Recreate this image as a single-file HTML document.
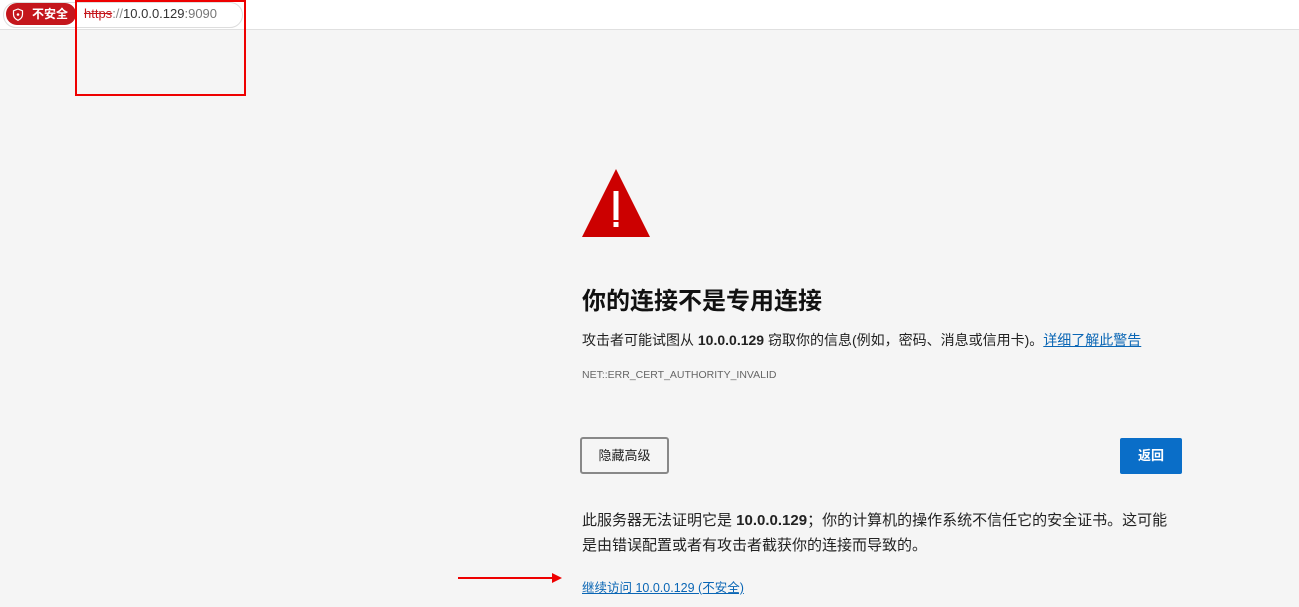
<!DOCTYPE html>
<html><head><meta charset="utf-8">
<style>
*{margin:0;padding:0;box-sizing:border-box}
body{width:1299px;height:607px;background:#f5f5f5;font-family:"Liberation Sans","Noto Sans CJK SC",sans-serif;position:relative;overflow:hidden;color:#1f1f1f}
.bar{position:absolute;left:0;top:0;width:1299px;height:30px;background:#fff;border-bottom:1px solid #e0e0e0}
.pill{position:absolute;left:3px;top:2px;width:240px;height:26px;border:1px solid #ddd;border-radius:13px;background:#fff}
.badge{position:absolute;left:6px;top:3px;width:70px;height:22px;border-radius:11px;background:#c4161c;color:#fff;font-size:12px;font-weight:bold;line-height:22px;padding-left:26px}
.url{position:absolute;left:84px;top:6px;font-size:13px;color:#333}
.url s{color:#c4161c}
.box{position:absolute;left:75px;top:0;width:171px;height:96px;border:2px solid #e00}
.a{position:absolute;left:582px}
h1{font-size:24px;font-weight:bold;color:#111}
.t{font-size:14px;color:#222}
.link{color:#0a66b5;text-decoration:underline}
</style></head><body>
<div class="bar"></div>
<div class="pill"></div>
<div class="badge">不安全</div>
<svg style="position:absolute;left:12px;top:8px" width="12" height="13" viewBox="0 0 12 13"><path d="M6 1L1.5 2.8v3.5c0 3 2 5 4.5 6 2.5-1 4.5-3 4.5-6V2.8z" fill="none" stroke="#fff" stroke-width="1.2"/><circle cx="6" cy="6.5" r="1.3" fill="#fff"/></svg>
<div class="url"><s>https</s><span style="color:#888">://</span>10.0.0.129<span style="color:#777">:9090</span></div>
<div class="box"></div>

<svg class="a" style="top:169px" width="68" height="69" viewBox="0 0 68 69"><polygon points="34,0 68,68 0,68" fill="#cc0000"/><rect x="31.5" y="22" width="5" height="29" fill="#fff"/><rect x="31.5" y="53" width="5" height="5" fill="#fff"/></svg>

<h1 class="a" style="top:281px">你的连接不是专用连接</h1>
<div class="a t" style="top:330px">攻击者可能试图从 <b>10.0.0.129</b> 窃取你的信息(例如，密码、消息或信用卡)。<span class="link">详细了解此警告</span></div>
<div class="a" style="top:369px;font-size:10.5px;color:#666">NET::ERR_CERT_AUTHORITY_INVALID</div>

<div class="a" style="top:437px;left:580px;width:89px;height:37px;border:2px solid #888;border-radius:3px;background:#f5f5f5;font-size:13px;text-align:center;line-height:33px">隐藏高级</div>
<div style="position:absolute;left:1120px;top:438px;width:62px;height:36px;background:#0a6ec8;border-radius:2px;color:#fff;font-size:13px;font-weight:bold;text-align:center;line-height:36px">返回</div>

<div class="a t" style="top:508px;width:600px;font-size:15px;line-height:25px">此服务器无法证明它是 <b>10.0.0.129</b>；你的计算机的操作系统不信任它的安全证书。这可能是由错误配置或者有攻击者截获你的连接而导致的。</div>
<div class="a t" style="top:577px;font-size:12.5px"><span class="link">继续访问 10.0.0.129 (不安全)</span></div>

<svg style="position:absolute;left:458px;top:572px" width="105" height="12"><line x1="0" y1="6" x2="95" y2="6" stroke="#e00" stroke-width="2"/><polygon points="94,1 104,6 94,11" fill="#e00"/></svg>
</body></html>
